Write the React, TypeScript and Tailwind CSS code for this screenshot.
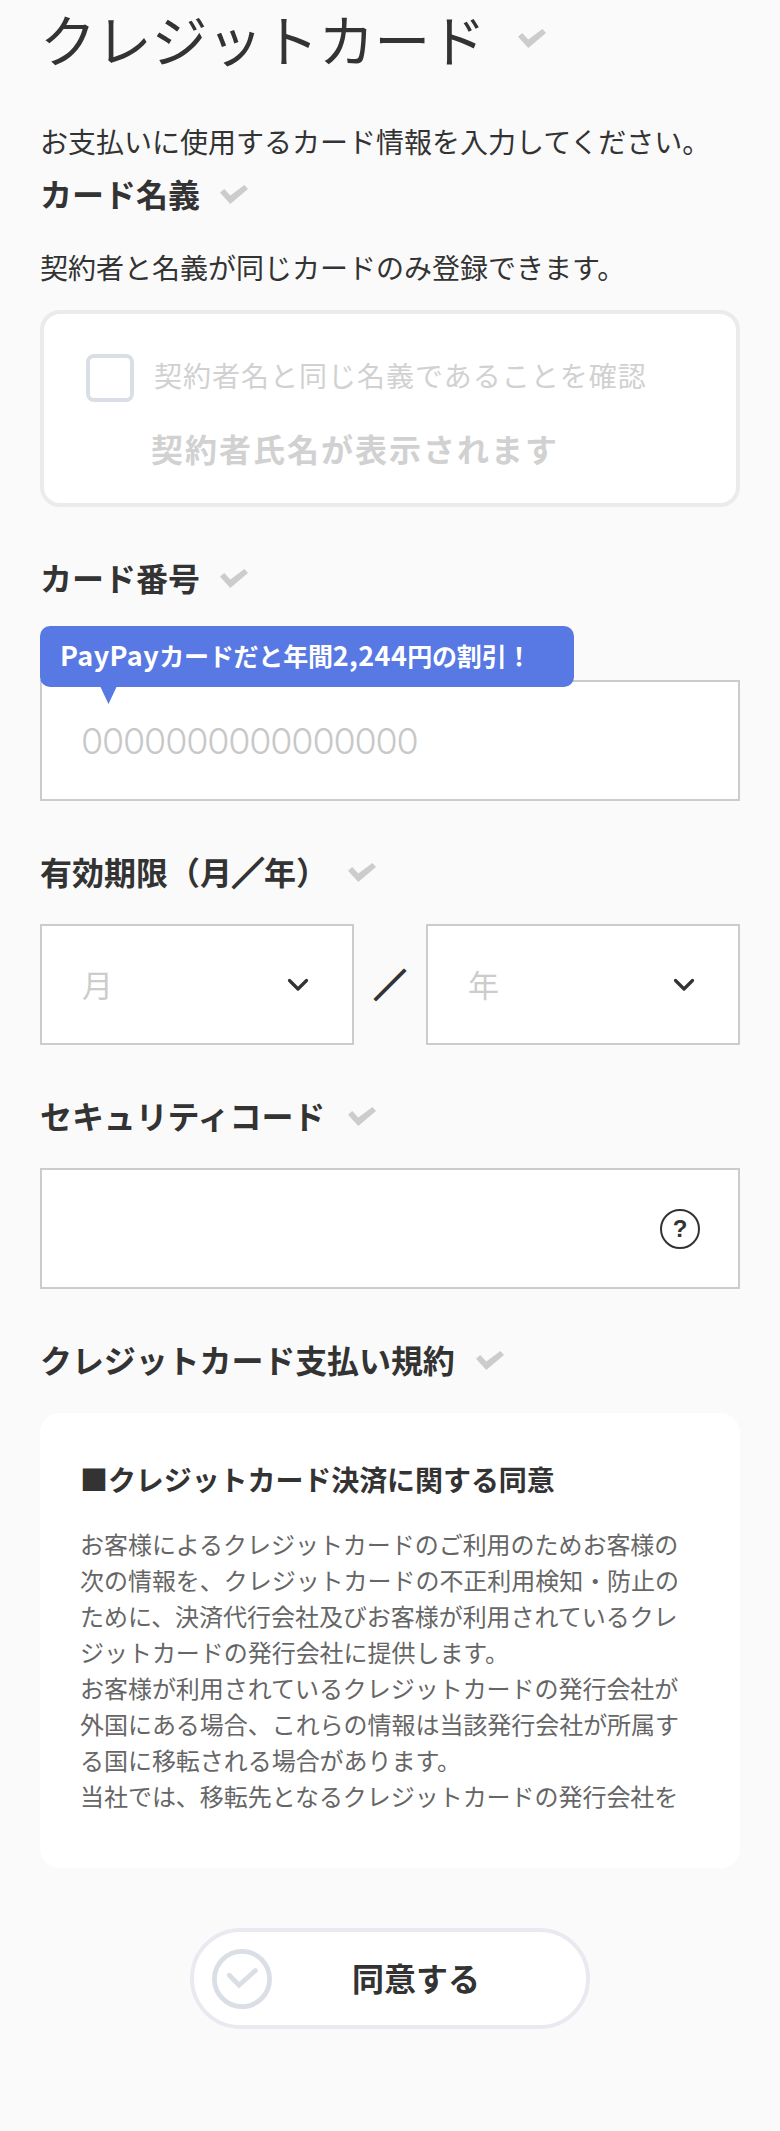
import React from "react";

function CheckMark({ className = "" }: { className?: string }) {
  return (
    <svg className={`h-[20px] w-[28px] shrink-0 ${className}`} viewBox="0 0 28 20">
      <path d="M0 7.8 4.2 4 10.3 10.4 24.4 0 28 3.9 10.3 18.9z" fill="#cccccc" />
    </svg>
  );
}

function Slash() {
  return <span className="[-webkit-text-stroke:2px_#333333]">／</span>;
}

function Heading({
  children,
  className = "mt-[51px]",
  textClass = "",
}: {
  children: React.ReactNode;
  className?: string;
  textClass?: string;
}) {
  return (
    <div className={`flex h-10 items-center gap-5 ${className}`}>
      <h2 className={`mb-[3px] text-[32px] leading-10 font-bold whitespace-nowrap ${textClass}`}>{children}</h2>
      <CheckMark className="mt-[2px]" />
    </div>
  );
}

function Select({ label }: { label: string }) {
  return (
    <div className="flex h-[121px] w-[314px] items-center justify-between border-2 border-[#cccccc] bg-white pr-[43px] pl-10">
      <span className="mb-[2px] text-[31px] leading-10 font-normal text-[#cccccc]">{label}</span>
      <svg className="h-[14px] w-[22px]" viewBox="0 0 22 14" fill="none">
        <path d="M2.5 2.5 11 11 19.5 2.5" stroke="#333333" strokeWidth="3.2" strokeLinecap="round" strokeLinejoin="round" />
      </svg>
    </div>
  );
}

const terms = [
  "お客様によるクレジットカードのご利用のためお客様の",
  "次の情報を、クレジットカードの不正利用検知・防止の",
  "ために、決済代行会社及びお客様が利用されているクレ",
  "ジットカードの発行会社に提供します。",
  "お客様が利用されているクレジットカードの発行会社が",
  "外国にある場合、これらの情報は当該発行会社が所属す",
  "る国に移転される場合があります。",
  "当社では、移転先となるクレジットカードの発行会社を",
];

export default function App() {
  return (
    <main
      lang="ja"
      className="min-h-[2131px] w-[780px] bg-[#fafafa] px-10 font-['Noto_Sans_CJK_JP',sans-serif] text-[#333333]"
    >
      <div className="flex h-[78px] items-center gap-[30px]">
        <h1 className="mb-[3px] w-[448px] text-[56px] leading-[75px] font-normal tracking-[-0.3px] whitespace-nowrap">
          クレジットカード
        </h1>
        <CheckMark />
      </div>
      <p className="mt-[43px] text-[28px] leading-10 whitespace-nowrap">
        お支払いに使用するカード情報を入力してください。
      </p>
      <Heading className="mt-[13px]">カード名義</Heading>
      <p className="mt-[33px] text-[28px] leading-10 whitespace-nowrap">
        契約者と名義が同じカードのみ登録できます。
      </p>

      <div className="mt-[23px] h-[197px] rounded-[20px] border-4 border-[#ebebeb] bg-white pt-[40px] pl-[42px] text-[#d1d1d1]">
        <div className="flex h-12 items-center gap-5">
          <span className="h-12 w-12 rounded-[8px] border-4 border-[#dadfe6] bg-white" />
          <span className="mb-[6px] text-[28px] leading-10 tracking-[1px] whitespace-nowrap">
            契約者名と同じ名義であることを確認
          </span>
        </div>
        <p className="mt-[26px] pl-[65px] text-[32px] leading-10 font-bold tracking-[2px] whitespace-nowrap">
          契約者氏名が表示されます
        </p>
      </div>

      <Heading>カード番号</Heading>
      <div className="relative mt-[82px] flex h-[121px] items-center border-2 border-[#cccccc] bg-white pl-[39px]">
        <span className="font-['Inter',sans-serif] text-[36px] leading-10 font-[350] tracking-[-1.2px] text-[#c8c8c8]">
          0000000000000000
        </span>
        <div className="absolute -top-[56px] -left-[2px] flex h-[61px] w-[534px] items-center rounded-[10px] bg-[#5878e3] pl-5">
          <span className="mb-[4px] text-[25px] leading-10 font-bold tracking-[-0.2px] whitespace-nowrap text-white">
            <span className="text-[27px] tracking-[0.4px]">PayPay</span>カードだと年間
            <span className="text-[27px] tracking-[0.4px]">2,244</span>円の割引！
          </span>
          <svg className="absolute top-[60px] left-[60px] h-[18px] w-[17px]" viewBox="0 0 17 18">
            <path d="M0 0h17L8.5 18z" fill="#5878e3" />
          </svg>
        </div>
      </div>

      <Heading>
        有効期限（月
        <Slash />
        年）
      </Heading>
      <div className="mt-8 flex items-center justify-between">
        <Select label="月" />
        <span className="mb-[3px] text-[32px] leading-10 font-bold">
          <Slash />
        </span>
        <Select label="年" />
      </div>

      <Heading textClass="w-[288px] tracking-[-0.1px]">セキュリティコード</Heading>
      <div className="mt-8 flex h-[121px] items-center justify-end border-2 border-[#cccccc] bg-white pr-[38px]">
        <span className="flex h-10 w-10 items-center justify-center rounded-full border-2 border-[#333333] font-['Liberation_Sans',sans-serif] text-[24px] leading-none font-bold">
          ?
        </span>
      </div>

      <Heading textClass="w-[416px] tracking-[-0.1px]">クレジットカード支払い規約</Heading>
      <section className="mt-[33px] h-[455px] rounded-[20px] bg-white px-10 pt-[46px]">
        <h3 className="text-[28px] leading-10 font-bold tracking-[-0.08px] whitespace-nowrap">
          ■クレジットカード決済に関する同意
        </h3>
        <div className="mt-[27px] text-[24px] leading-9 tracking-[-0.04px] whitespace-nowrap text-[#666666]">
          {terms.map((line) => (
            <p key={line}>{line}</p>
          ))}
        </div>
      </section>

      <button
        type="button"
        className="mx-auto mt-[60px] flex h-[101px] w-[400px] items-center rounded-full border-4 border-[#e9eaf0] bg-white pl-[18px]"
      >
        <svg className="h-[60px] w-[60px]" viewBox="0 0 60 60" fill="none" stroke="#dadfe6">
          <circle cx="30" cy="30" r="27.6" strokeWidth="4.8" />
          <path d="M17.3 26.3 27 36.2 43.4 21.5" strokeWidth="4.8" strokeLinecap="round" strokeLinejoin="miter" />
        </svg>
        <span className="mb-[4px] ml-20 text-[32px] leading-10 font-bold">同意する</span>
      </button>
    </main>
  );
}
